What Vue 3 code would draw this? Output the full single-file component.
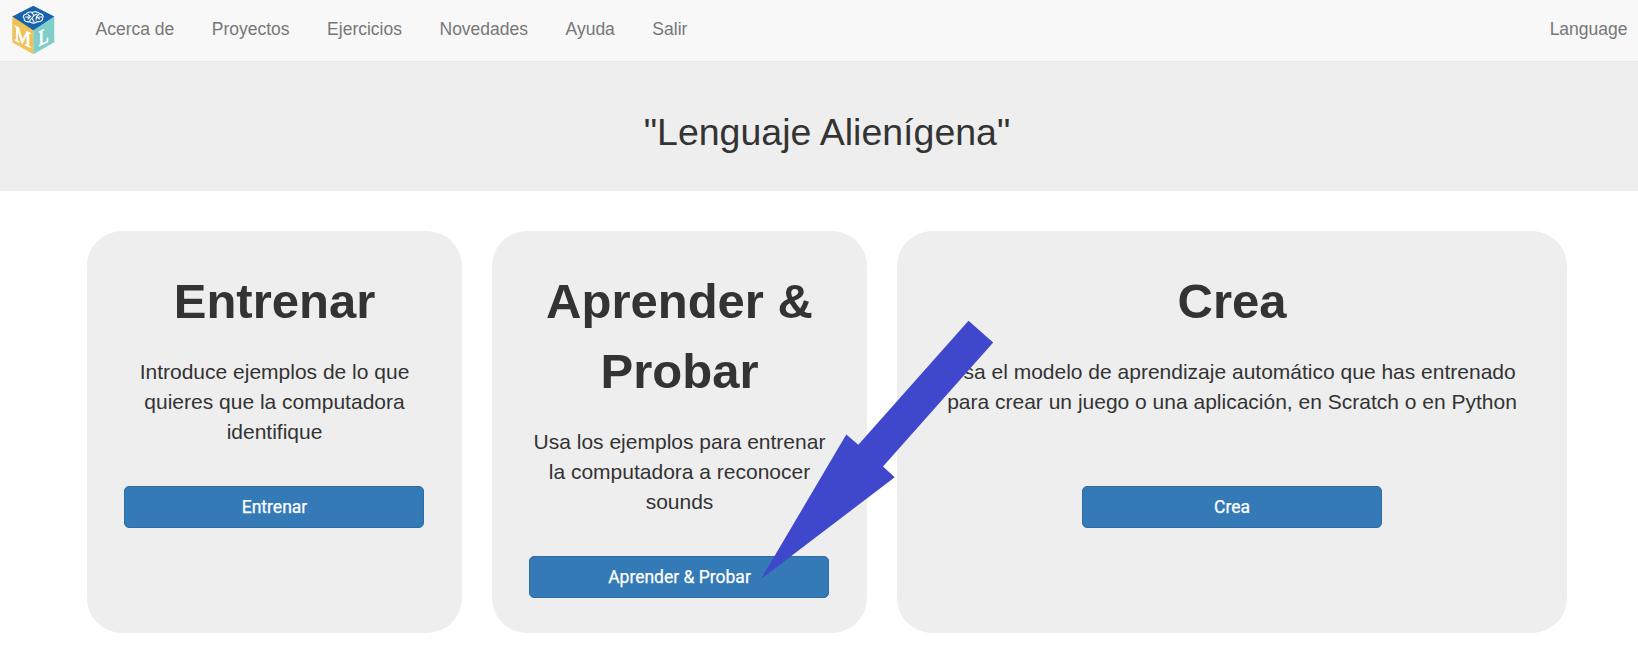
<script setup>
const links = ['Acerca de', 'Proyectos', 'Ejercicios', 'Novedades', 'Ayuda', 'Salir']
const cards = [
  {
    title: 'Entrenar',
    lines: ['Introduce ejemplos de lo que', 'quieres que la computadora', 'identifique'],
    action: 'Entrenar',
  },
  {
    title: 'Aprender & Probar',
    lines: ['Usa los ejemplos para entrenar', 'la computadora a reconocer', 'sounds'],
    action: 'Aprender & Probar',
  },
  {
    title: 'Crea',
    lines: [
      'Usa el modelo de aprendizaje automático que has entrenado',
      'para crear un juego o una aplicación, en Scratch o en Python',
    ],
    action: 'Crea',
  },
]
</script>

<template>
  <div class="page">
    <nav class="navbar">
      <svg class="logo" width="44" height="50" viewBox="0 0 44 50">
        <path d="M1.3 11.5 22.3 24.5V49.2L1.3 37.2Z" fill="#f1c057" />
        <path d="M43.3 11.5 22.3 24.5V49.2L43.3 37.2Z" fill="#80cdca" />
        <path d="M22.3 .8 43.3 11.5 22.3 25.3 1.3 11.5Z" fill="#1762ac" />
        <g fill="none" stroke="#fff" stroke-width="1.1" stroke-linecap="round">
          <path d="M15 9.2C16 7.2 19 6.5 21 7.5 23.5 6.2 27.5 6.7 28.6 8.6 31.5 8.8 33 11 31.7 13 32 15.6 29 17 26.6 16.5 24.5 18.6 20.5 18.6 18.8 16.7 15.5 17.5 12.6 15.7 13.2 13.4 11.3 11.8 12.6 9.4 15 9.2Z" />
          <path d="M17 9.5 19.5 11.5 17 14M21 8 23 10.5 21 13 23 17M28 9.5 25.5 11.5 28.5 14M14.5 12H18M23 10.5 26 9M21 13 18.5 16M25.5 11.5 25 15M28 12H31" />
        </g>
        <text class="letter" transform="matrix(.84 .4 0 1 3.6 34.9)" font-size="22">M</text>
        <text class="letter" transform="matrix(.76 -.36 0 1 27.6 41.2)" font-size="22">L</text>
      </svg>
      <ul class="links">
        <li v-for="link in links" :key="link"><a>{{ link }}</a></li>
      </ul>
      <a class="language">Language</a>
    </nav>

    <header class="banner">
      <h2>"Lenguaje Alienígena"</h2>
    </header>

    <main class="cards">
      <section v-for="card in cards" :key="card.title" class="card">
        <h1>{{ card.title }}</h1>
        <p>
          <span v-for="line in card.lines" :key="line" class="line">{{ line }}</span>
        </p>
        <button type="button">{{ card.action }}</button>
      </section>
    </main>

    <svg class="arrow" width="234" height="260" viewBox="761 320 234 260">
      <path d="M761 579 846.3 434.5 858.3 444.8 968.5 320.7 993.2 342.5 883 466.5 894.7 477.3Z" fill="#3f48cc" />
    </svg>
  </div>
</template>

<style>
html,
body {
  margin: 0;
  background: #fff;
}
</style>

<style scoped>
.page {
  position: relative;
  height: 650px;
  overflow: hidden;
  color: #333;
  font: 17.5px/25px "Liberation Sans", Arial, sans-serif;
}
.navbar {
  display: flex;
  align-items: flex-start;
  height: 62px;
  box-sizing: border-box;
  padding: 0 10.5px 0 11px;
  background: #f8f8f8;
  border-bottom: 1px solid #e7e7e7;
  color: #777;
}
.logo {
  flex: none;
  margin-top: 5px;
}
.letter {
  fill: #fff;
  stroke: #fff;
  stroke-width: 0.8px;
  font-family: "Liberation Serif", serif;
}
.links {
  display: flex;
  gap: 37.5px;
  margin: 17px 0 0 40.5px;
  padding: 0;
  list-style: none;
}
.language {
  margin: 17px 0 0 auto;
}
.banner {
  height: 129px;
  padding-left: 16px;
  background: #eee;
  text-align: center;
}
h2 {
  margin: 0;
  padding-top: 50px;
  font-size: 37.5px;
  font-weight: 400;
  line-height: 41px;
}
.cards {
  display: grid;
  grid-template-columns: 375px 375px 670px;
  gap: 30px;
  margin: 40px 0 0 87px;
}
.card {
  display: flex;
  flex-direction: column;
  align-items: center;
  box-sizing: border-box;
  padding: 35px;
  border-radius: 35px;
  background: #eee;
  text-align: center;
}
h1 {
  margin: 0;
  font-size: 49px;
  line-height: 70px;
}
p {
  min-height: 90px;
  margin: 21px 0 39px;
  font-size: 21px;
  line-height: 30px;
}
.line {
  display: block;
  white-space: nowrap;
}
button {
  width: 300px;
  height: 42px;
  margin-right: 1px;
  padding: 0 0 0 1px;
  border: 1px solid #2e6da4;
  border-radius: 5px;
  background: #337ab7;
  color: #fff;
  font: 400 17.5px/25px Roboto, sans-serif;
  -webkit-text-stroke: 0.25px #fff;
}
.arrow {
  position: absolute;
  left: 761px;
  top: 320px;
}
</style>
